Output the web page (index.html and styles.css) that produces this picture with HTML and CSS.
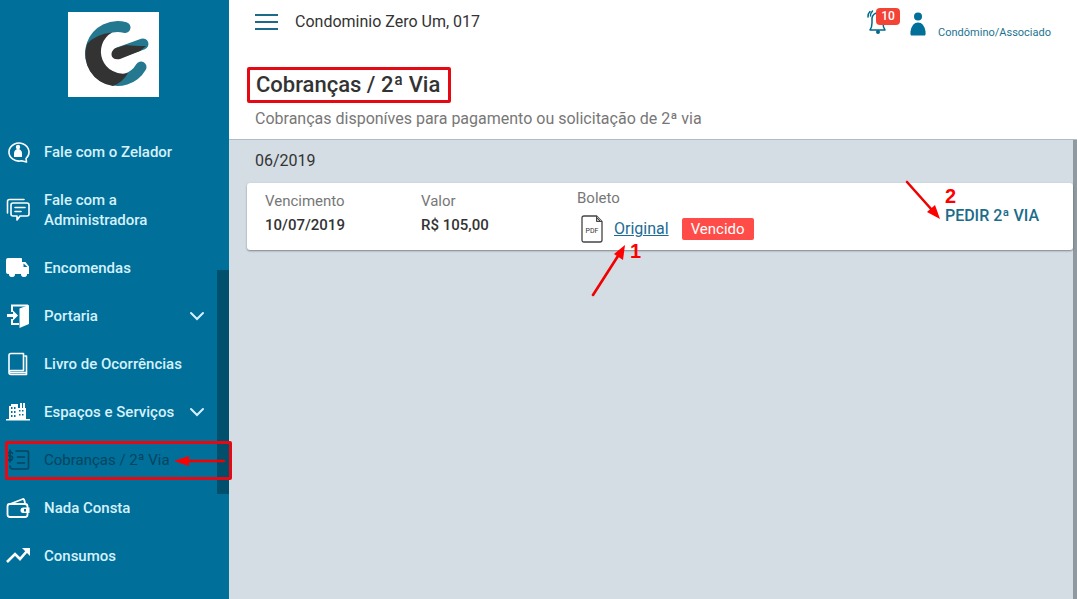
FILE: index.html
```html
<!DOCTYPE html>
<html lang="pt-BR">
<head>
  <meta charset="UTF-8">
  <meta name="viewport" content="width=device-width, initial-scale=1">
  <title>Cobranças / 2ª Via</title>
  <link rel="stylesheet" href="styles.css">
</head>
<body>
  <aside class="sidebar">
    <a class="logo" href="#" aria-label="Início">
      <svg viewBox="0 0 91 85" width="91" height="85">
        <path d="M57 15.500A27 27 0 1 0 73 55" fill="none" stroke="#24788f" stroke-width="11" stroke-linecap="round"/>
        <path d="M19 32Q28 22 44 20.500A22 22 0 0 0 60 61Q55 70 45 74A32 32 0 0 1 19 32z" fill="#333"/>
        <path d="M50 41L75 32" stroke="#24788f" stroke-width="11" stroke-linecap="round"/>
        <path d="M48 36L58 33Q66 34 78 34L72 39 52 47C42 49 41 39 48 36z" fill="#333"/>
      </svg>
    </a>

    <nav class="menu">
      <a href="#">
        <svg class="icon" viewBox="0 0 24 24">
          <path d="M20 18.500A10 9 0 1 0 15.500 20.800L20.500 22z" fill="none" stroke="currentColor" stroke-width="1.600" stroke-linejoin="round"/>
          <circle cx="12" cy="7" r="2.200"/>
          <path d="M8 17v-3.500c0-3 2-4.500 4-4.500s4 1.500 4 4.500V17z"/>
        </svg>
        <span>Fale com o Zelador</span>
      </a>
      <a href="#">
        <svg class="icon" viewBox="0 0 24 24">
          <g fill="none" stroke="currentColor" stroke-width="1.600" stroke-linejoin="round" stroke-linecap="round">
            <path d="M1.500 15V3.500q0-2 2-2H18"/>
            <path d="M7 5h14q2 0 2 2v9q0 2-2 2h-7l-3 4v-4H7q-2 0-2-2V7q0-2 2-2z"/>
            <path d="M9 9.500h10M9 13.500h6"/>
          </g>
        </svg>
        <span>Fale com a Administradora</span>
      </a>
      <a href="#">
        <svg class="icon" viewBox="0 0 24 24">
          <path fill-rule="evenodd" d="M2 2h13q1 0 1 1v3h3.500L23 10.500V18h-2a3 3 0 0 1-6 0H9a3 3 0 0 1-6 0H2q-2 0-2-2V4q0-2 2-2zM17.500 7.500v3.500h4z"/>
          <circle cx="6" cy="18" r="2.800"/><circle cx="18" cy="18" r="2.800"/>
        </svg>
        <span>Encomendas</span>
      </a>
      <a href="#">
        <svg class="icon" viewBox="0 0 24 24">
          <path d="M6 8V1.500h16M6 15v5h7" fill="none" stroke="currentColor" stroke-width="2"/>
          <path d="M13.500 4.500L23 1v19l-9.500 4zM1 10h6V6.500l5 5-5 5V13H1z"/>
        </svg>
        <span>Portaria</span>
        <svg class="chevron" viewBox="0 0 16 10"><path d="M2 2l6 6 6-6"/></svg>
      </a>
      <a href="#">
        <svg class="icon" viewBox="0 0 24 24">
          <g fill="none" stroke="currentColor" stroke-width="1.600" stroke-linejoin="round">
            <path d="M5 1.500h12.500v17H5q-2 0-2 2V3.500q0-2 2-2zM3 20.500q0 2 2 2h15.500V4h-2M4 20.500h16"/>
          </g>
        </svg>
        <span>Livro de Ocorrências</span>
      </a>
      <a href="#">
        <svg class="icon" viewBox="0 0 24 24">
          <path fill-rule="evenodd" d="M0 19h3V6h2V4h7v4h2V3h2v5h1V3h2v5h1v11h4v1.500H0zM5 7v2h1.500V7zm3 0v2h1.500V7zm-3 4v2h1.500v-2zm3 0v2h1.500v-2zm-3 4v2h1.500v-2zm3 0v2h1.500v-2zm5-5v1.500h1.500V10zm3 0v1.500h1.500V10zm-3 4v1.500h1.500V14zm3 0v1.500h1.500V14z"/>
        </svg>
        <span>Espaços e Serviços</span>
        <svg class="chevron" viewBox="0 0 16 10"><path d="M2 2l6 6 6-6"/></svg>
      </a>
      <a class="active" href="#" aria-current="page">
        <svg class="icon" viewBox="0 0 24 24">
          <g fill="none" stroke="currentColor" stroke-width="1.600" stroke-linejoin="round" stroke-linecap="round">
            <path d="M10 3h11q1.500 0 1.500 1.500v15q0 1.500-1.500 1.500H7q-3 0-3-3M11.500 9h7M11.500 15h7"/>
            <path d="M6.500 5.500Q6 4 4 4T1.500 6 4 8t2.500 2.200T4 12.500 1.500 11M4 2v12"/>
          </g>
        </svg>
        <span>Cobranças / 2ª Via</span>
      </a>
      <a href="#">
        <svg class="icon" viewBox="0 0 24 24">
          <g fill="none" stroke="currentColor" stroke-width="1.800" stroke-linejoin="round">
            <path d="M4 8L17 3q1.500 0 2 4.500M3.500 8H19q2.500 0 2.500 2.500v8q0 2.500-2.500 2.500H4q-2.500 0-2.500-2.500v-8Q1.500 8 3.500 8z"/>
          </g>
          <path fill-rule="evenodd" d="M23.500 11.500V17H17q-2.500 0-2.500-2.700T17 11.500zM18 13v2.500h2V13z"/>
        </svg>
        <span>Nada Consta</span>
      </a>
      <a href="#">
        <svg class="icon" viewBox="0 0 24 24">
          <path d="M1 18l8-8 5 5 7-8" fill="none" stroke="currentColor" stroke-width="2.600"/>
          <path d="M16 4h8v8z"/>
        </svg>
        <span>Consumos</span>
      </a>
    </nav>

    <div class="sidebar-thumb"></div>
    <div class="mark mark-menu">
      <svg viewBox="0 0 52 12" width="52" height="12"><path d="M50 6H12" stroke="#f00000" stroke-width="2.400" stroke-linecap="round"/><path d="M0 6l15-5v10z" fill="#ff0000"/></svg>
    </div>
  </aside>

  <div class="page">
    <header class="topbar">
      <button class="menu-toggle" type="button" aria-label="Menu">
        <svg viewBox="0 0 23 16" width="23" height="16"><path d="M0 1h23M0 8h23M0 15h23" stroke="#1b6b88" stroke-width="2"/></svg>
      </button>
      <strong class="condo">Condominio Zero Um, 017</strong>
      <button class="bell" type="button" aria-label="Notificações">
        <svg viewBox="0 0 24 26" width="24" height="26">
          <g fill="none" stroke="#00688f" stroke-width="1.500" stroke-linecap="round" stroke-linejoin="round">
            <path d="M4 21h15q-2-3-2-7V9q0-5-5-5T6 9v5q0 4-2 7zM4 2.500Q1.500 5 2 8M6.500 2Q4.500 4 4.500 7"/>
          </g>
          <circle cx="12" cy="23" r="2" fill="#00688f"/>
        </svg>
        <span class="badge">10</span>
      </button>
      <svg class="person" viewBox="0 0 16 24" width="16" height="24">
        <circle cx="8" cy="4.500" r="4"/>
        <path d="M1 23.500q-1-1-.5-4Q2 10.500 8 10.500t7.500 9q.5 3-.5 4z"/>
      </svg>
      <a class="profile" href="#">Condômino/Associado</a>
    </header>

    <div class="page-title">
      <h1>Cobranças / 2ª Via</h1>
      <p>Cobranças disponíves para pagamento ou solicitação de 2ª via</p>
    </div>

    <main class="content">
      <h2>06/2019</h2>
      <section class="card">
        <div class="field">
          <span class="label">Vencimento</span>
          <strong>10/07/2019</strong>
        </div>
        <div class="field">
          <span class="label">Valor</span>
          <strong>R$ 105,00</strong>
        </div>
        <div class="field field-boleto">
          <span class="label">Boleto</span>
          <div class="boleto">
            <svg viewBox="0 0 22 28" width="22" height="28">
              <path d="M3 1h12.500L21 6.500V25q0 2-2 2H3q-2 0-2-2V3q0-2 2-2z" fill="#fff" stroke="#444" stroke-width="1.300"/>
              <path d="M15.500 1v5.500H21M15.500 2.500l4 4" fill="#bbb" stroke="#444"/>
              <text x="11" y="18" text-anchor="middle">PDF</text>
            </svg>
            <a href="#">Original</a>
            <span class="status">Vencido</span>
          </div>
          <svg class="arrow-one" viewBox="0 0 36 54" width="36" height="54"><path d="M2 52L27 13" stroke="#f00000" stroke-width="2.600" stroke-linecap="round"/><path d="M34 2l-2 15-9-6z" fill="#ff0000"/></svg>
          <span class="step step-one">1</span>
        </div>
        <div class="action">
          <button type="button">PEDIR 2ª VIA</button>
          <svg class="arrow-two" viewBox="0 0 38 42" width="38" height="42"><path d="M3 3l25 28" stroke="#f00000" stroke-width="2.600" stroke-linecap="round"/><path d="M36 40l-13-7 8-7z" fill="#ff0000"/></svg>
          <span class="step step-two">2</span>
        </div>
      </section>
    </main>
  </div>
</body>
</html>
```
FILE: styles.css
```css
* {
  box-sizing: border-box;
}

body {
  margin: 0;
  min-height: 100vh;
  display: flex;
  font-family: Roboto, sans-serif;
  font-size: 15px;
  line-height: 20px;
  color: #333;
  background: #fff;
}

button {
  padding: 0;
  border: none;
  background: none;
  font: inherit;
  cursor: pointer;
}

/* sidebar */
.sidebar {
  position: relative;
  flex: 0 0 229px;
  padding-top: 12px;
  background: #006f99;
}

.logo {
  display: block;
  width: 91px;
  height: 85px;
  margin: 0 auto 31px 68px;
  background: #fff;
}

.menu a {
  display: flex;
  align-items: center;
  gap: 14px;
  padding: 14px 24px 14px 6px;
  color: #d5f1fb;
  font-weight: 500;
  text-decoration: none;
}

.menu span {
  flex: 1;
}

.menu .active {
  color: #07445f;
  font-weight: 400;
}

.icon {
  flex: none;
  width: 24px;
  height: 24px;
  margin: -2px 0;
  fill: currentColor;
}

.menu a:not(.active) .icon {
  color: #fff;
}

.chevron {
  width: 16px;
  height: 10px;
  fill: none;
  stroke: #d5f1fb;
  stroke-width: 2;
  stroke-linecap: round;
}

.sidebar-thumb {
  position: absolute;
  top: 270px;
  right: 0;
  width: 12px;
  height: 224px;
  background: #004f6d;
}

/* red help marks */
.mark {
  position: absolute;
  border: 3px solid #e50914;
  border-radius: 2px;
}

.mark-menu {
  top: 441px;
  left: 5px;
  right: -3px;
  height: 39px;
  display: flex;
  align-items: center;
  justify-content: flex-end;
  padding-right: 3px;
}

.step {
  position: absolute;
  font-family: "Liberation Sans", Arial, sans-serif;
  font-size: 20px;
  font-weight: bold;
  color: #f00;
}

/* header */
.page {
  flex: 1;
  min-width: 0;
  display: flex;
  flex-direction: column;
}

.topbar {
  display: flex;
  align-items: center;
  height: 44px;
  padding: 0 26px;
}

.menu-toggle {
  display: flex;
}

.condo {
  margin-left: 17px;
  margin-right: auto;
  font-size: 16px;
  font-weight: 400;
}

.bell {
  position: relative;
  display: flex;
  margin-right: 20px;
}

.badge {
  position: absolute;
  top: -1px;
  left: 10px;
  width: 24px;
  height: 17px;
  border-radius: 4px;
  background: #f44336;
  color: #fff;
  font-size: 12px;
  font-weight: 500;
  line-height: 17px;
}

.person {
  margin-top: 4px;
  fill: #006f99;
}

.profile {
  margin-top: 22px;
  margin-left: 12px;
  font-size: 11px;
  color: #1b7391;
  text-decoration: none;
}

.page-title {
  padding: 23px 18px 10px;
  border-bottom: 1px solid #aebdc5;
}

.page-title h1 {
  width: fit-content;
  margin: 0;
  padding: 0 8px 0 6px;
  border: 3px solid #e50914;
  border-radius: 2px;
  font-size: 22px;
  font-weight: 500;
  line-height: 30px;
}

.page-title p {
  margin: 6px 8px 0;
  font-size: 16px;
  color: #777;
}

/* billing list */
.content {
  flex: 1;
  padding-left: 18px;
  border-right: 4px solid #8f999f;
  background: #d3dde3;
}

.content h2 {
  margin: 0;
  padding: 11px 8px 12px;
  font-size: 16px;
  font-weight: 400;
}

.card {
  display: grid;
  grid-template-columns: 156px 156px 1fr auto;
  padding: 5px 34px 6px 18px;
  border-radius: 3px;
  background: #fff;
  box-shadow: 0 1px 2px rgba(0, 0, 0, 0.4);
}

.field {
  display: flex;
  flex-direction: column;
  gap: 4px;
  padding-top: 3px;
}

.field strong {
  font-size: 15px;
  font-weight: 500;
}

.label {
  color: #777;
}

.field-boleto {
  position: relative;
  gap: 6px;
  padding-top: 0;
}

.boleto {
  display: flex;
  align-items: center;
  height: 30px;
  padding-left: 4px;
}

.boleto text {
  font-size: 7px;
  fill: #333;
}

.boleto a {
  margin-left: 11px;
  font-size: 16px;
  color: #1b6b94;
}

.status {
  margin-left: 13px;
  padding: 1px 9px;
  border-radius: 2px;
  background: #ff4c48;
  color: #fff;
}

.arrow-one {
  position: absolute;
  top: 55px;
  left: 14px;
}

.step-one {
  top: 53px;
  left: 53px;
}

.action {
  position: relative;
  align-self: center;
}

.action button {
  font-size: 16px;
  color: #1b6b8a;
  font-weight: 500;
}

.arrow-two {
  position: absolute;
  right: 97px;
  bottom: 5px;
}

.step-two {
  left: 0;
  bottom: 20px;
}
```
